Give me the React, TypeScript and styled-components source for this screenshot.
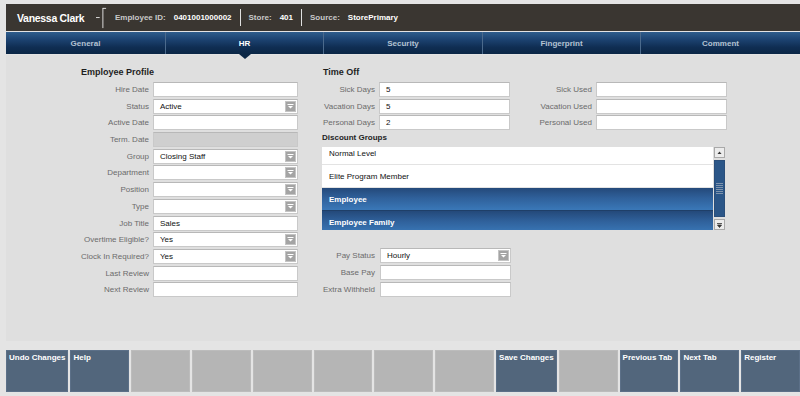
import { styled, createGlobalStyle } from 'styled-components';

const GlobalStyle = createGlobalStyle`
  html, body {
    margin: 0;
    padding: 0;
    background: #e4e4e4;
  }
  body {
    font-family: "Liberation Sans", Arial, sans-serif;
  }
`;

type Field = { label: string; value?: string; kind: 'text' | 'select' | 'disabled' };

const profileFields: Field[] = [
  { label: 'Hire Date', kind: 'text' },
  { label: 'Status', value: 'Active', kind: 'select' },
  { label: 'Active Date', kind: 'text' },
  { label: 'Term. Date', kind: 'disabled' },
  { label: 'Group', value: 'Closing Staff', kind: 'select' },
  { label: 'Department', kind: 'select' },
  { label: 'Position', kind: 'select' },
  { label: 'Type', kind: 'select' },
  { label: 'Job Title', value: 'Sales', kind: 'text' },
  { label: 'Overtime Eligible?', value: 'Yes', kind: 'select' },
  { label: 'Clock In Required?', value: 'Yes', kind: 'select' },
  { label: 'Last Review', kind: 'text' },
  { label: 'Next Review', kind: 'text' },
];

const timeOff = [
  ['Sick Days', '5', 'Sick Used'],
  ['Vacation Days', '5', 'Vacation Used'],
  ['Personal Days', '2', 'Personal Used'],
];

const payFields: Field[] = [
  { label: 'Pay Status', value: 'Hourly', kind: 'select' },
  { label: 'Base Pay', kind: 'text' },
  { label: 'Extra Withheld', kind: 'text' },
];

const discountGroups = [
  { name: 'Normal Level', selected: false },
  { name: 'Elite Program Member', selected: false },
  { name: 'Employee', selected: true },
  { name: 'Employee Family', selected: true },
];

const tabs = ['General', 'HR', 'Security', 'Fingerprint', 'Comment'];

const buttons = [
  'Undo Changes', 'Help', '', '', '', '', '', '', 'Save Changes', '', 'Previous Tab', 'Next Tab', 'Register',
];

function ArrowBox() {
  return (
    <Arrow>
      <svg width="11" height="11" viewBox="0 0 11 11">
        <rect x="0" y="0" width="11" height="11" fill="#a4a4a4" />
        <rect x="0.5" y="0.5" width="10" height="10" fill="none" stroke="#c4c4c4" />
        <rect x="2.5" y="3" width="6" height="1" fill="#fff" />
        <path d="M3 5 L8 5 L5.5 7.5 Z" fill="#fff" />
      </svg>
    </Arrow>
  );
}

function FieldInput({ field }: { field: Field }) {
  return (
    <Input $disabled={field.kind === 'disabled'}>
      <InputText>{field.value}</InputText>
      {field.kind === 'select' && <ArrowBox />}
    </Input>
  );
}

export default function App() {
  return (
    <Page>
      <GlobalStyle />
      <Header>
        <Name>Vanessa Clark</Name>
        <Bracket>
          <svg width="12" height="24" viewBox="0 0 12 24">
            <path d="M0 11.5 H4 M7.5 1 V23 M7.5 1.5 H11" stroke="#e8e8e8" strokeWidth="1" fill="none" />
          </svg>
        </Bracket>
        <Info>
          <InfoLabel>Employee ID:</InfoLabel>
          <InfoValue>0401001000002</InfoValue>
        </Info>
        <Divider />
        <Info>
          <InfoLabel>Store:</InfoLabel>
          <InfoValue>401</InfoValue>
        </Info>
        <Divider />
        <Info>
          <InfoLabel>Source:</InfoLabel>
          <InfoValue>StorePrimary</InfoValue>
        </Info>
      </Header>

      <TabBar>
        {tabs.map((t) => (
          <Tab key={t} $active={t === 'HR'}>{t}</Tab>
        ))}
      </TabBar>

      <Panel>
        <LeftCol>
          <Heading>Employee Profile</Heading>
          <FormGrid>
            {profileFields.map((f) => (
              <Row key={f.label}>
                <Label>{f.label}</Label>
                <FieldInput field={f} />
              </Row>
            ))}
          </FormGrid>
        </LeftCol>

        <RightCol>
          <Heading $indent={1}>Time Off</Heading>
          <TimeOffGrid>
            {timeOff.map(([a, v, b]) => (
              <TimeRow key={a}>
                <Label>{a}</Label>
                <FieldInput field={{ label: a, value: v, kind: 'text' }} />
                <Label>{b}</Label>
                <FieldInput field={{ label: b, kind: 'text' }} />
              </TimeRow>
            ))}
          </TimeOffGrid>

          <SubHeading>Discount Groups</SubHeading>
          <ListBox>
            <ListView>
              <ListInner>
                {discountGroups.map((g) => (
                  <ListItem key={g.name} $selected={g.selected}>{g.name}</ListItem>
                ))}
              </ListInner>
            </ListView>
            <ScrollBar>
              <ScrollButton>
                <svg width="9" height="9" viewBox="0 0 9 9">
                  <path d="M2.5 6 L6.5 6 L4.5 3.5 Z" fill="#333" />
                </svg>
              </ScrollButton>
              <Thumb>
                <Grip />
              </Thumb>
              <ScrollButton>
                <svg width="9" height="9" viewBox="0 0 9 9">
                  <path d="M2 3.5 H7 M2.5 5 L6.5 5 L4.5 7.5 Z" stroke="#333" strokeWidth="0.8" fill="#333" />
                </svg>
              </ScrollButton>
            </ScrollBar>
          </ListBox>

          <PayGrid>
            {payFields.map((f) => (
              <PayRow key={f.label}>
                <Label>{f.label}</Label>
                <FieldInput field={f} />
              </PayRow>
            ))}
          </PayGrid>
        </RightCol>
      </Panel>

      <Footer>
        {buttons.map((b, i) => (
          <FooterButton key={i} $active={b !== ''}>{b}</FooterButton>
        ))}
      </Footer>
    </Page>
  );
}

const Page = styled.div`
  width: 794px;
  height: 392px;
  padding: 4px 0 0 6px;
  display: flex;
  flex-direction: column;
`;

const Header = styled.div`
  height: 27px;
  background: #3a3631;
  display: flex;
  align-items: center;
  padding-left: 11px;
`;

const Name = styled.div`
  color: #fff;
  font-weight: bold;
  font-size: 10.5px;
  letter-spacing: -0.3px;
  width: 79px;
  white-space: nowrap;
`;

const Bracket = styled.div`
  display: flex;
  align-items: center;
  width: 11px;
`;

const Info = styled.div`
  display: flex;
  gap: 8px;
  font-size: 8px;
  font-weight: bold;
  padding: 0 8px;
`;

const InfoLabel = styled.span`
  color: #c9c9c9;
`;

const InfoValue = styled.span`
  color: #fff;
`;

const Divider = styled.div`
  width: 1px;
  height: 17px;
  background: #e0e0e0;
`;

const TabBar = styled.div`
  margin-top: 1px;
  height: 22px;
  display: grid;
  grid-template-columns: 159px 158px 159px 158px 160px;
  background: linear-gradient(#2f5d8c 0%, #1c4270 35%, #0f2d52 70%, #0b2746 100%);
`;

const Tab = styled.div<{ $active?: boolean }>`
  position: relative;
  display: flex;
  align-items: center;
  justify-content: center;
  font-size: 8px;
  font-weight: bold;
  color: ${(p) => (p.$active ? '#ffffff' : '#b4c2d2')};
  border-left: 1px solid #4b6a8c;
  &:first-child {
    border-left: none;
  }
  &::after {
    content: '';
    display: ${(p) => (p.$active ? 'block' : 'none')};
    position: absolute;
    left: 50%;
    bottom: -5px;
    margin-left: -6px;
    border-left: 6px solid transparent;
    border-right: 6px solid transparent;
    border-top: 5px solid #0b2746;
  }
`;

const Panel = styled.div`
  margin-top: 1px;
  height: 286px;
  background: #dfdfdf;
  display: flex;
  padding: 12px 0 0 52px;
  box-sizing: border-box;
`;

const LeftCol = styled.div`
  width: 240px;
  display: flex;
  flex-direction: column;
`;

const RightCol = styled.div`
  margin-left: 24px;
  width: 403px;
  display: flex;
  flex-direction: column;
`;

const Heading = styled.div<{ $indent?: number }>`
  font-size: 9px;
  font-weight: bold;
  color: #1e1e1e;
  line-height: 11px;
  height: 11px;
  margin-bottom: 4px;
  padding-left: ${(p) => (p.$indent !== undefined ? p.$indent : 23)}px;
`;

const SubHeading = styled.div`
  font-size: 8px;
  font-weight: bold;
  color: #1e1e1e;
  line-height: 10px;
  margin: 3px 0 4px 0;
`;

const FormGrid = styled.div`
  display: flex;
  flex-direction: column;
  gap: 1.7px;
`;

const Row = styled.div`
  display: grid;
  grid-template-columns: 91px 145px;
  column-gap: 4px;
  height: 15px;
  align-items: center;
`;

const Label = styled.div`
  font-size: 8px;
  color: #6b6b6b;
  text-align: right;
  white-space: nowrap;
`;

const Input = styled.div<{ $disabled?: boolean }>`
  height: 15px;
  box-sizing: border-box;
  background: ${(p) => (p.$disabled ? '#cfcfcf' : '#ffffff')};
  border: 1px solid #c9c9c9;
  border-top-color: #b8b8b8;
  display: flex;
  align-items: center;
  padding-left: 6px;
`;

const InputText = styled.span`
  flex: 1;
  font-size: 8px;
  color: #111;
`;

const Arrow = styled.span`
  display: flex;
  margin-right: 1px;
`;

const TimeOffGrid = styled.div`
  display: flex;
  flex-direction: column;
  gap: 1.7px;
`;

const TimeRow = styled.div`
  display: grid;
  grid-template-columns: 53px 131px 78px 131px;
  column-gap: 4px;
  height: 15px;
  align-items: center;
  & > div:nth-child(3) {
    margin-left: -4px;
  }
`;

const ListBox = styled.div`
  height: 83px;
  display: flex;
  width: 403px;
`;

const ListView = styled.div`
  width: 391px;
  overflow: hidden;
  background: #fff;
`;

const ListInner = styled.div`
  margin-top: -5px;
`;

const ListItem = styled.div<{ $selected?: boolean }>`
  height: 23px;
  box-sizing: border-box;
  display: flex;
  align-items: center;
  padding-left: 7px;
  font-size: 8px;
  font-weight: ${(p) => (p.$selected ? 'bold' : 'normal')};
  color: ${(p) => (p.$selected ? '#ffffff' : '#111111')};
  background: ${(p) => (p.$selected ? 'linear-gradient(#24497a, #2f609a 45%, #3a78b8)' : '#ffffff')};
  border-bottom: 1px solid ${(p) => (p.$selected ? '#1f3f68' : '#e3e3e3')};
`;

const ScrollBar = styled.div`
  width: 11px;
  margin-left: 1px;
  display: flex;
  flex-direction: column;
  gap: 2px;
`;

const ScrollButton = styled.div`
  height: 11px;
  box-sizing: border-box;
  background: #ececec;
  border: 1px solid #a9a9a9;
  display: flex;
  align-items: center;
  justify-content: center;
`;

const Thumb = styled.div`
  flex: 1;
  background: #2b5688;
  border: 1px solid #2a4e7a;
  display: flex;
  align-items: center;
  justify-content: center;
`;

const Grip = styled.div`
  width: 7px;
  height: 11px;
  background: repeating-linear-gradient(#7f94ad 0 1px, transparent 1px 2px);
`;

const PayGrid = styled.div`
  margin-top: 18px;
  display: flex;
  flex-direction: column;
  gap: 1.7px;
`;

const PayRow = styled.div`
  display: grid;
  grid-template-columns: 53px 131px;
  column-gap: 5px;
  height: 15px;
  align-items: center;
`;

const Footer = styled.div`
  margin-top: 9px;
  height: 42px;
  display: grid;
  grid-template-columns: repeat(13, 1fr);
  column-gap: 2px;
`;

const FooterButton = styled.div<{ $active?: boolean }>`
  background: ${(p) => (p.$active ? '#52667c' : '#b5b5b5')};
  box-shadow: inset 0 0 0 1px ${(p) => (p.$active ? '#5c7088' : '#bcbcbc')};
  color: #fff;
  font-size: 8px;
  font-weight: bold;
  padding: 3px 3px;
  white-space: nowrap;
`;
